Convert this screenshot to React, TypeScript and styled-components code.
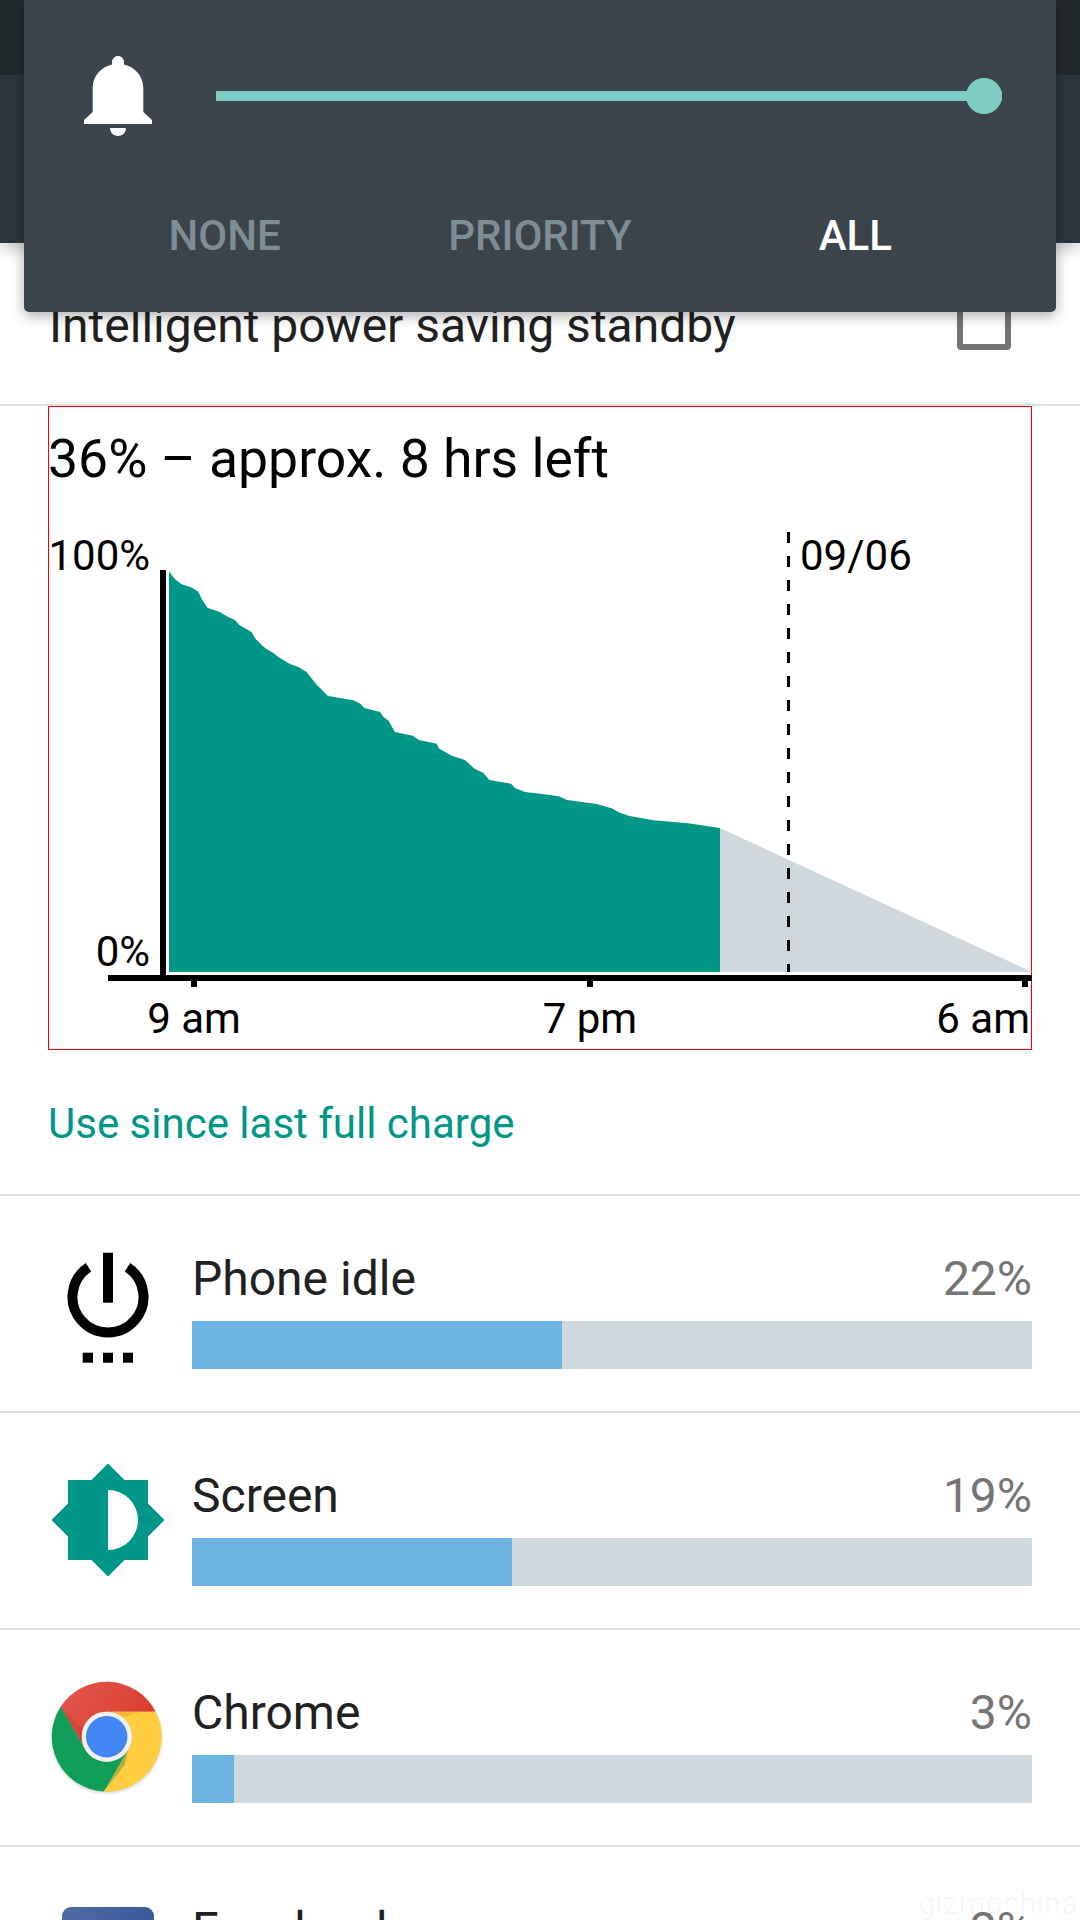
import React from 'react'
import styled, {createGlobalStyle} from 'styled-components'

const GlobalStyle = createGlobalStyle`
    html, body {
        margin: 0;
        padding: 0;
        background: #fff;
    }
    * {
        box-sizing: border-box;
    }
`

const Page = styled.div`
    position: relative;
    width: 1080px;
    height: 1920px;
    overflow: hidden;
    background: #fff;
    font-family: Roboto, "Liberation Sans", sans-serif;
`

const TopBar = styled.div`
    height: 243px;
    background: #2a363b;
    box-shadow: 0 6px 14px rgba(0, 0, 0, 0.22);
`

const StatusBand = styled.div`
    height: 75px;
    background: #22292d;
`

const VolumePanel = styled.div`
    position: absolute;
    z-index: 2;
    top: 0;
    left: 24px;
    width: 1032px;
    height: 312px;
    padding: 56px 54px 0 60px;
    background: #3b434b;
    border-radius: 0 0 5px 5px;
    box-shadow: 0 4px 14px rgba(0, 0, 0, 0.32);
`

const SliderRow = styled.div`
    display: flex;
    align-items: center;
    gap: 64px;
    height: 80px;
`

const SliderTrack = styled.div`
    display: flex;
    align-items: center;
    flex: 1;
    height: 10px;
    background: #80cbc4;
`

const SliderThumb = styled.div`
    flex: none;
    width: 36px;
    height: 36px;
    margin-left: auto;
    border-radius: 50%;
    background: #80cbc4;
`

const ModeTabs = styled.div`
    display: grid;
    grid-template-columns: repeat(3, 1fr);
    width: 946px;
    margin: 76px 0 0 -17px;
`

const ModeTab = styled.div<{$active?: boolean}>`
    text-align: center;
    font-size: 42px;
    font-weight: 500;
    line-height: 48px;
    color: ${p => (p.$active ? '#ffffff' : '#7f8e96')};
`

const PowerRow = styled.div`
    display: flex;
    align-items: flex-start;
    justify-content: space-between;
    height: 163px;
    padding: 53px 69px 0 49px;
    border-bottom: 2px solid #e0e0e0;
`

const PowerLabel = styled.div`
    font-size: 48px;
    line-height: 60px;
    color: #212121;
`

const CheckBox = styled.div`
    width: 54px;
    height: 54px;
    border: 6px solid #757575;
    border-radius: 4px;
`

const ChartFrame = styled.div`
    width: 984px;
    height: 644px;
    margin-left: 48px;
    border: 1px solid #ff0000;
`

const Headline = styled.div`
    margin-left: -1px;
    padding-top: 18px;
    font-size: 53.5px;
    line-height: 68px;
    color: #000;
`

const ChartSvg = styled.svg`
    display: block;
    overflow: visible;
`

const ChartLabel = styled.text`
    font-family: Roboto, "Liberation Sans", sans-serif;
    font-size: 42px;
    fill: #000;
`

const UsageHeading = styled.div`
    height: 146px;
    padding: 48px 0 0 48px;
    font-size: 42px;
    line-height: 52px;
    color: #009688;
    border-bottom: 2px solid #dedede;
`

const UsageRow = styled.div`
    display: grid;
    grid-template-columns: 144px 1fr;
    column-gap: 12px;
    height: 217px;
    padding: 0 48px 0 36px;
    border-bottom: 2px solid #e0e0e0;
`

const UsageIcon = styled.svg`
    display: block;
    margin-top: 35px;
    overflow: visible;
`

const UsageBody = styled.div`
    padding-top: 53px;
`

const UsageTitle = styled.div`
    display: flex;
    justify-content: space-between;
    font-size: 48px;
    line-height: 60px;
    color: #212121;
`

const UsagePercent = styled.span`
    color: #757575;
`

const UsageTrack = styled.div`
    height: 48px;
    margin-top: 12px;
    background: #cfd8dc;
`

const UsageFill = styled.div`
    height: 100%;
    background: #6cb5e2;
`

const Watermark = styled.div`
    position: absolute;
    right: 2px;
    bottom: -4px;
    font-size: 31px;
    line-height: 40px;
    color: rgba(0, 0, 0, 0.04);
`

const BellIcon = () => (
    <svg width="68" height="80" viewBox="0 0 68 80">
        <path fill="#fff" d="M34 0C37.3 0 40 2.7 40 6V8.4C51 11 59.3 20 59.3 32V56L68 64V68H0V64L8.7 56V32C8.7 20 17 11 28 8.4V6C28 2.7 30.7 0 34 0Z"/>
        <path fill="#fff" d="M26 72H42C42 77 38 80 34 80C30 80 26 77 26 72Z"/>
    </svg>
)

const PowerIcon = () => (
    <UsageIcon width="144" height="144" viewBox="0 0 144 144">
        <path fill="none" stroke="#000" strokeWidth="10" d="M52.5 36.3A35.5 35.5 0 1 0 91.5 36.3"/>
        <rect x="67" y="21.7" width="10" height="50"/>
        <rect x="46.7" y="121.7" width="10.3" height="10"/>
        <rect x="67" y="121.7" width="10" height="10"/>
        <rect x="87" y="121.7" width="10" height="10"/>
    </UsageIcon>
)

const BrightnessIcon = () => (
    <UsageIcon width="144" height="144" viewBox="0 0 144 144">
        <polygon fill="#009688" points="72,15.5 88.5,32 112,32 112,55.5 128.5,72 112,88.5 112,112 88.5,112 72,128.5 55.5,112 32,112 32,88.5 15.5,72 32,55.5 32,32 55.5,32"/>
        <path fill="#fff" d="M72 42A30 30 0 0 1 72 102Z"/>
    </UsageIcon>
)

const ChromeIcon = () => (
    <UsageIcon width="144" height="144" viewBox="0 0 144 144">
        <defs>
            <linearGradient id="chromeRed" x1="0" y1="0" x2="1" y2="0.4">
                <stop offset="0" stopColor="#e2574c"/>
                <stop offset="1" stopColor="#d93f30"/>
            </linearGradient>
            <radialGradient id="chromeEdge" cx="0.5" cy="0.5" r="0.5">
                <stop offset="0.9" stopColor="#000" stopOpacity="0.18"/>
                <stop offset="1" stopColor="#000" stopOpacity="0"/>
            </radialGradient>
        </defs>
        <circle cx="70.7" cy="73.2" r="57.5" fill="url(#chromeEdge)"/>
        <g transform="translate(70.7 71.7)">
            <path fill="url(#chromeRed)" d="M49 -25A55 55 0 0 0 -46.1 -29.9L-21.65 12.5A25 25 0 0 1 0 -25Z"/>
            <path fill="#ffcd40" d="M49 -25L0 -25A25 25 0 0 1 21.65 12.5L-2.85 54.9A55 55 0 0 0 49 -25Z"/>
            <path fill="#0f9d58" d="M-46.1 -29.9L-21.65 12.5A25 25 0 0 0 21.65 12.5L-2.85 54.9A55 55 0 0 1 -46.1 -29.9Z"/>
            {/* faint cast shadows where the sectors meet */}
            <path fill="#a52714" opacity="0.22" d="M-46.1 -29.9L-21.65 12.5L-24 -8Z"/>
            <path fill="#ea6100" opacity="0.22" d="M34 -25L0 -25L14 -19Z"/>
            <path fill="#0b6b3c" opacity="0.3" d="M21.65 12.5L-2.85 54.9L18 28Z"/>
            <circle r="25" fill="#f1f1f1"/>
            <circle r="20.7" fill="#4285f4"/>
        </g>
    </UsageIcon>
)

const FacebookIcon = () => (
    <UsageIcon width="144" height="144" viewBox="0 0 144 144">
        <defs>
            <linearGradient id="facebookBlue" x1="0" y1="0" x2="1" y2="0">
                <stop offset="0" stopColor="#4f6ba7"/>
                <stop offset="1" stopColor="#3b5998"/>
            </linearGradient>
        </defs>
        <rect x="26" y="25" width="92" height="92" rx="9" fill="url(#facebookBlue)"/>
    </UsageIcon>
)

// battery level samples, in the chart's own pixel space
const levelCurve = [
    [169, 571.4], [175, 579.2], [181.7, 584.2], [191.7, 587.6], [198.3, 591.7], [202.3, 600.1],
    [207.7, 607.9], [220, 612], [226.7, 616.3], [235, 620.1], [239, 624.8], [245, 628.2],
    [251.7, 632.2], [255, 638.3], [261.7, 645.1], [265.7, 648.5], [273.3, 652.9], [278.3, 656.9],
    [290, 664], [298.3, 667.1], [306.7, 672.1], [316, 684], [328, 696.1], [353.3, 700.2],
    [360, 703.6], [364.3, 708], [380, 712], [383.3, 716.8], [388.3, 720.5], [395, 732],
    [412.7, 735.7], [419, 740.1], [436.7, 743.8], [439, 748.5], [452.3, 756], [465, 760],
    [474.3, 768.5], [483.3, 772.9], [489.3, 780], [511, 783.7], [515, 788.1], [525, 792.1],
    [540, 793.8], [558.9, 796.2], [566.9, 799.9], [596.8, 804], [612.3, 808.4], [619.2, 812.4],
    [629.5, 816.1], [653.6, 820.2], [688, 823.2], [720, 828]
]

const levelPoints = levelCurve.map(p => p.join(',')).join(' ') + ' 720,972 169,972'

const BatteryChart = () => (
    <ChartSvg width="982" height="556" viewBox="49 493 982 556">
        <polygon fill="#009688" points={levelPoints}/>
        <polygon fill="#cfd8dc" points="720,828 1032,972 720,972"/>
        <line x1="788.5" y1="532" x2="788.5" y2="972" stroke="#000" strokeWidth="3" strokeDasharray="11 13"/>
        <rect x="160" y="570" width="6" height="405"/>
        <rect x="108" y="975" width="924" height="6"/>
        <rect x="191" y="981" width="6" height="6"/>
        <rect x="587" y="981" width="6" height="6"/>
        <rect x="1022" y="981" width="6" height="6"/>
        <ChartLabel x="150" y="570" textAnchor="end">100%</ChartLabel>
        <ChartLabel x="150" y="966" textAnchor="end">0%</ChartLabel>
        <ChartLabel x="800" y="570">09/06</ChartLabel>
        <ChartLabel x="194" y="1033" textAnchor="middle">9 am</ChartLabel>
        <ChartLabel x="590" y="1033" textAnchor="middle">7 pm</ChartLabel>
        <ChartLabel x="1030" y="1033" textAnchor="end">6 am</ChartLabel>
    </ChartSvg>
)

const usage = [
    {name: 'Phone idle', percent: '22%', width: 370, icon: <PowerIcon/>},
    {name: 'Screen', percent: '19%', width: 320, icon: <BrightnessIcon/>},
    {name: 'Chrome', percent: '3%', width: 42, icon: <ChromeIcon/>},
    {name: 'Facebook', percent: '2%', width: 30, icon: <FacebookIcon/>}
]

const App = () => (
    <Page>
        <GlobalStyle/>
        <TopBar>
            <StatusBand/>
        </TopBar>
        <VolumePanel>
            <SliderRow>
                <BellIcon/>
                <SliderTrack>
                    <SliderThumb/>
                </SliderTrack>
            </SliderRow>
            <ModeTabs>
                <ModeTab>NONE</ModeTab>
                <ModeTab>PRIORITY</ModeTab>
                <ModeTab $active>ALL</ModeTab>
            </ModeTabs>
        </VolumePanel>
        <PowerRow>
            <PowerLabel>Intelligent power saving standby</PowerLabel>
            <CheckBox/>
        </PowerRow>
        <ChartFrame>
            <Headline>36% – approx. 8 hrs left</Headline>
            <BatteryChart/>
        </ChartFrame>
        <UsageHeading>Use since last full charge</UsageHeading>
        {usage.map(item => (
            <UsageRow key={item.name}>
                {item.icon}
                <UsageBody>
                    <UsageTitle>
                        {item.name}
                        <UsagePercent>{item.percent}</UsagePercent>
                    </UsageTitle>
                    <UsageTrack>
                        <UsageFill style={{width: item.width}}/>
                    </UsageTrack>
                </UsageBody>
            </UsageRow>
        ))}
        <Watermark>gizmochina</Watermark>
    </Page>
)

export default App
